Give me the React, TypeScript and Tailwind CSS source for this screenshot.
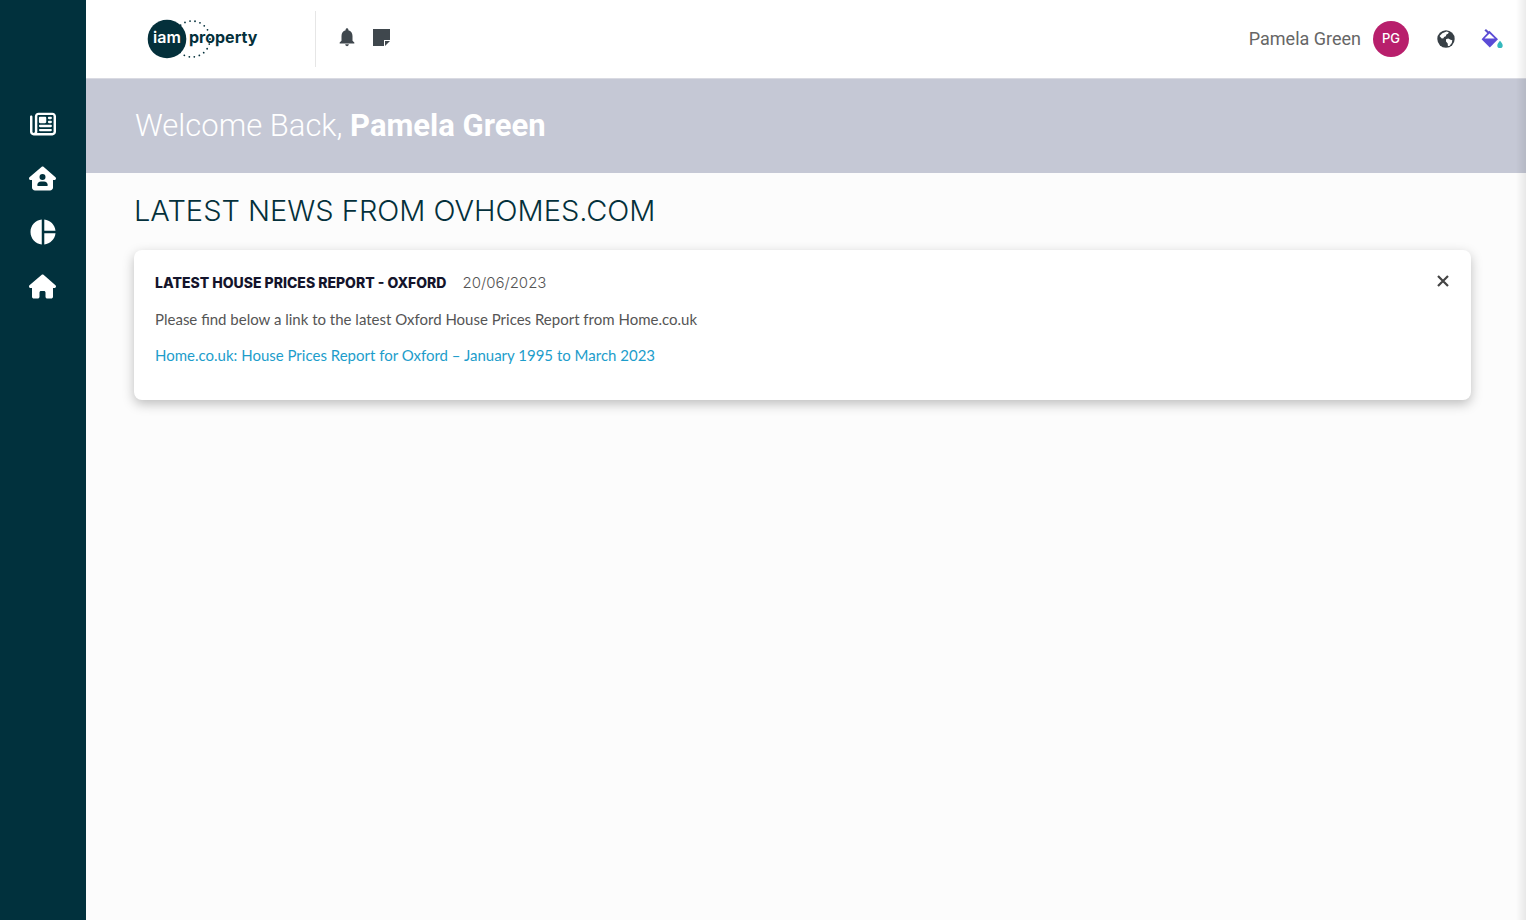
import React from "react";
import { FaRegNewspaper, FaHouseUser, FaHouse } from "react-icons/fa6";
import { MdPieChart, MdNotifications } from "react-icons/md";

const navItems = [
  { label: "News", icon: <FaRegNewspaper size={26} /> },
  { label: "Branch", icon: <FaHouseUser size={27} /> },
  { label: "Reports", icon: <MdPieChart size={30} /> },
  { label: "Properties", icon: <FaHouse size={27} /> },
];

function Logo() {
  return (
    <svg width="112" height="40" viewBox="0 0 112 40" role="img" aria-label="iam property">
      <circle cx="20" cy="20" r="19.3" fill="#04303b" />
      <circle cx="45" cy="20" r="18" fill="none" stroke="#04303b" strokeWidth="1.8" strokeLinecap="round" strokeDasharray="0 5.14" />
      <g fontFamily="Inter, sans-serif" fontWeight="700" fontSize="16">
        <text x="6" y="24" fill="#fff" fontWeight="600">iam</text>
        <text x="42" y="24" fill="#04303b">property</text>
      </g>
    </svg>
  );
}

function NoteIcon() {
  return (
    <svg width="17" height="17" viewBox="0 0 17 17" fill="#3f474d" aria-hidden="true">
      <path d="M0 0h17v11h-6v6H0z" />
      <path d="M12 12h5l-5 5z" />
    </svg>
  );
}

function GlobeIcon() {
  return (
    <svg width="18" height="18" viewBox="0 0 18 18" aria-hidden="true">
      <circle cx="9" cy="9" r="8.7" fill="#373f45" />
      <path d="M5.3 3.2 9.6 1.6l2.2.6-.8 1.6-1.6.8-.6 1.700-1.800.6-.5 1.400-1.700.3-1.400-1.500L2.600 6z" fill="#fff" />
      <path d="M9 9.3l2.2-.8 2.4 1.3 1.7.4-.5 2.8-2.4 3-1.5.1-.2-2.7L9 11.5z" fill="#fff" />
    </svg>
  );
}

function PaintIcon() {
  return (
    <svg width="22" height="20" viewBox="0 0 22 20" aria-hidden="true">
      <path d="M4.200.8 8 4.300" stroke="#5b4fc9" strokeWidth="2.200" fill="none" />
      <path d="M8.400 1.800 17 10.200 8.800 18.400.6 10.200z" fill="#5b4bd6" />
      <path d="M8.500 4.600 13.700 9.600H3.500z" fill="#fff" />
      <path d="M19 11.800c1.500 1.900 2.700 3.200 2.700 4.600a2.700 2.700 0 0 1-5.400 0c0-1.400 1.200-2.700 2.700-4.600z" fill="#35b8bd" />
    </svg>
  );
}

export default function App() {
  return (
    <div className="flex min-h-screen bg-[#fcfcfc] font-['Roboto',sans-serif]">
      <nav aria-label="Main" className="w-[86px] shrink-0 bg-[#01313d] pt-[106px] pr-px">
        <ul className="flex flex-col items-center gap-[18px]">
          {navItems.map((item) => (
            <li key={item.label}>
              <a href="#" aria-label={item.label} className="flex h-9 w-9 items-center justify-center text-white">
                {item.icon}
              </a>
            </li>
          ))}
        </ul>
      </nav>

      <div className="flex min-w-0 flex-1 flex-col">
        <header className="flex h-[79px] items-center border-b border-[#d9dae2] bg-white pr-[23px] pl-[61px]">
          <a href="#" className="block">
            <Logo />
          </a>
          <div className="ml-14 h-14 w-px bg-[#e6e6e6]" />
          <div className="mb-1 ml-5 flex items-center gap-[15px] text-[#3f474d]">
            <button type="button" aria-label="Notifications">
              <MdNotifications size={22} />
            </button>
            <button type="button" aria-label="Notes">
              <NoteIcon />
            </button>
          </div>
          <div className="ml-auto flex items-center">
            <span className="text-lg text-[#666]">Pamela Green</span>
            <button
              type="button"
              aria-label="Account"
              className="ml-3 flex h-9 w-9 items-center justify-center rounded-full bg-[#b81f6c] font-['Inter',sans-serif] text-[13px] font-medium text-white"
            >
              PG
            </button>
            <button type="button" aria-label="Language" className="ml-7">
              <GlobeIcon />
            </button>
            <button type="button" aria-label="Theme" className="ml-[26px]">
              <PaintIcon />
            </button>
          </div>
        </header>

        <section className="bg-[#c5c8d5] px-[49px] py-6">
          <h1 className="text-[31px] leading-[46px] font-light text-white">
            Welcome Back, <strong className="font-bold">Pamela Green</strong>
          </h1>
        </section>

        <main className="px-12 pt-5 pr-[55px] font-['Inter',sans-serif]">
          <h2 className="text-[29px] leading-9 font-light text-[#04303b]">LATEST NEWS FROM OVHOMES.COM</h2>
          <article className="mt-[21px] flex items-start justify-between rounded-lg bg-white px-[21px] pt-[21px] pb-[33px] shadow-[0_4px_12px_rgba(0,0,0,0.25)]">
            <div className="flex flex-col gap-3 text-[15px] leading-6 text-[#555]">
              <div className="flex items-center gap-4">
                <h3 className="text-sm leading-6 font-extrabold text-[#14142b]">LATEST HOUSE PRICES REPORT - OXFORD</h3>
                <time dateTime="2023-06-20" className="font-light">20/06/2023</time>
              </div>
              <p className="font-['Lato',sans-serif]">
                Please find below a link to the latest Oxford House Prices Report from Home.co.uk
              </p>
              <p className="font-['Lato',sans-serif]">
                <a href="#" className="text-[#1d9dcb]">
                  Home.co.uk: House Prices Report for Oxford – January 1995 to March 2023
                </a>
              </p>
            </div>
            <button type="button" aria-label="Dismiss" className="mt-1 text-[#444]">
              <svg width="14" height="12" viewBox="0 0 14 12" aria-hidden="true">
                <path d="M2 1l10 10M12 1L2 11" stroke="currentColor" strokeWidth="2.200" />
              </svg>
            </button>
          </article>
        </main>
      </div>
      <div className="pointer-events-none fixed inset-y-0 right-0 w-2.5 bg-linear-to-l from-black/8 to-transparent" />
    </div>
  );
}
